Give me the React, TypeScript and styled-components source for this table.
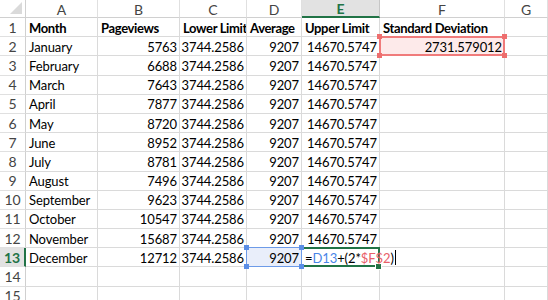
import React from "react";
import styled, { createGlobalStyle, css } from "styled-components";

const GlobalStyle = createGlobalStyle`
  html, body {
    margin: 0;
    padding: 0;
    background: #ffffff;
  }
  body {
    font-family: "Lato", "Open Sans", sans-serif;
  }
`;

// widths of columns A..F, G takes what is left
const widths = [72, 82, 67, 55, 78, 125];
const letters = ["A", "B", "C", "D", "E", "F", "G"];

type Row = [string, string, string, string, string];

const rows: Row[] = [
  ["January", "5763", "3744.2586", "9207", "14670.5747"],
  ["February", "6688", "3744.2586", "9207", "14670.5747"],
  ["March", "7643", "3744.2586", "9207", "14670.5747"],
  ["April", "7877", "3744.2586", "9207", "14670.5747"],
  ["May", "8720", "3744.2586", "9207", "14670.5747"],
  ["June", "8952", "3744.2586", "9207", "14670.5747"],
  ["July", "8781", "3744.2586", "9207", "14670.5747"],
  ["August", "7496", "3744.2586", "9207", "14670.5747"],
  ["September", "9623", "3744.2586", "9207", "14670.5747"],
  ["October", "10547", "3744.2586", "9207", "14670.5747"],
  ["November", "15687", "3744.2586", "9207", "14670.5747"],
  ["December", "12712", "3744.2586", "9207", ""],
];

const App = () => {
  return (
    <>
      <GlobalStyle />
      <Sheet>
        <Corner>
          <CornerTriangle />
        </Corner>
        {letters.map((l) => (
          <ColHead key={l} $active={l === "E"}>
            {l}
          </ColHead>
        ))}

        <RowHead $active={false}>1</RowHead>
        <Cell $bold>Month</Cell>
        <Cell $bold>Pageviews</Cell>
        <Cell $bold>Lower Limit</Cell>
        <Cell $bold>Average</Cell>
        <Cell $bold>Upper Limit</Cell>
        <Cell $bold>Standard Deviation</Cell>
        <Cell />

        {rows.map((r, i) => {
          const n = i + 2;
          const last = n === 13;
          return (
            <React.Fragment key={n}>
              <RowHead $active={last}>{n}</RowHead>
              <Cell>{r[0]}</Cell>
              <Cell $num>{r[1]}</Cell>
              <Cell $num>{r[2]}</Cell>
              <Cell $num $mark={last ? "ref" : undefined}>
                {r[3]}
                {last && <Handles $color="#5b8ee6" />}
              </Cell>
              {last ? (
                <Cell $mark="edit">
                  <Formula>
                    =<RefBlue>D13</RefBlue>+(2*<RefRed>$F$2</RefRed>)
                    <Caret />
                  </Formula>
                  <EditHandle />
                </Cell>
              ) : (
                <Cell $num>{r[4]}</Cell>
              )}
              {n === 2 ? (
                <Cell $num $mark="dep">
                  2731.579012
                  <Handles $color="#ee6e6e" />
                </Cell>
              ) : (
                <Cell />
              )}
              <Cell />
            </React.Fragment>
          );
        })}

        {[14, 15].map((n) => (
          <React.Fragment key={n}>
            <RowHead $active={false}>{n}</RowHead>
            {letters.map((l) => (
              <Cell key={l} />
            ))}
          </React.Fragment>
        ))}
      </Sheet>
    </>
  );
};

const Sheet = styled.div`
  display: grid;
  grid-template-columns: 26px ${widths.map((w) => `${w}px`).join(" ")} 1fr;
  grid-template-rows: 18px repeat(15, 19.2px);
  width: 548px;
  height: 300px;
  overflow: hidden;
  font-size: 13px;
  color: #000000;
`;

const Corner = styled.div`
  position: relative;
  border-right: 1px solid #d0d0d0;
  border-bottom: 1px solid #d0d0d0;
  background: #ffffff;
`;

const CornerTriangle = styled.div`
  position: absolute;
  right: 3px;
  bottom: 3px;
  width: 0;
  height: 0;
  border-left: 12px solid transparent;
  border-bottom: 12px solid #dadada;
`;

const ColHead = styled.div<{ $active: boolean }>`
  display: flex;
  align-items: center;
  justify-content: center;
  box-sizing: border-box;
  border-right: 1px solid #e0e0e0;
  border-bottom: 1px solid #d0d0d0;
  color: #444444;
  font-size: 14px;
  padding-top: 1px;
  ${({ $active }) =>
    $active &&
    css`
      background: #e2e2e2;
      color: #217346;
      font-weight: 700;
      border-bottom: 2px solid #217346;
      border-right-color: #c6c6c6;
    `}
`;

const RowHead = styled.div<{ $active: boolean }>`
  display: flex;
  align-items: center;
  justify-content: center;
  box-sizing: border-box;
  border-right: 1px solid #d0d0d0;
  border-bottom: 1px solid #e0e0e0;
  color: #444444;
  font-size: 14px;
  ${({ $active }) =>
    $active &&
    css`
      background: #e2e2e2;
      color: #217346;
      font-weight: 700;
      border-right: 2px solid #217346;
    `}
`;

const markStyles = {
  dep: css`
    background: #fdeaea;
    overflow: visible;
    z-index: 2;
    &::after {
      content: "";
      position: absolute;
      inset: -1px;
      border: 2px solid #f07b7b;
      pointer-events: none;
    }
  `,
  ref: css`
    background: #e9eefa;
    overflow: visible;
    z-index: 3;
    &::after {
      content: "";
      position: absolute;
      inset: -1px;
      border: 1px solid #6d9be8;
      pointer-events: none;
    }
  `,
  edit: css`
    overflow: visible;
    z-index: 2;
    &::after {
      content: "";
      position: absolute;
      inset: -1px -1px -1px -2px;
      border: 2px solid #217346;
      pointer-events: none;
    }
  `,
};

const Cell = styled.div<{
  $bold?: boolean;
  $num?: boolean;
  $mark?: "dep" | "ref" | "edit";
}>`
  position: relative;
  display: flex;
  align-items: center;
  justify-content: ${({ $num }) => ($num ? "flex-end" : "flex-start")};
  box-sizing: border-box;
  padding: 1px 2px 0 3px;
  border-right: 1px solid #dadada;
  border-bottom: 1px solid #dadada;
  white-space: nowrap;
  overflow: hidden;
  font-weight: ${({ $bold }) => ($bold ? 700 : 400)};
  letter-spacing: ${({ $bold }) => ($bold ? "-0.35px" : "-0.1px")};
  ${({ $mark }) => $mark && markStyles[$mark]}
`;

const Handles = styled.span<{ $color: string }>`
  position: absolute;
  inset: -3px;
  pointer-events: none;
  z-index: 1;
  background:
    linear-gradient(${({ $color }) => $color}, ${({ $color }) => $color}) left top / 5px 5px no-repeat,
    linear-gradient(${({ $color }) => $color}, ${({ $color }) => $color}) right top / 5px 5px no-repeat,
    linear-gradient(${({ $color }) => $color}, ${({ $color }) => $color}) left bottom / 5px 5px no-repeat,
    linear-gradient(${({ $color }) => $color}, ${({ $color }) => $color}) right bottom / 5px 5px no-repeat;
`;

const EditHandle = styled.span`
  position: absolute;
  right: -3px;
  bottom: -4px;
  width: 5px;
  height: 5px;
  background: #217346;
  border: 1px solid #ffffff;
  z-index: 3;
`;

const Formula = styled.span`
  position: relative;
  z-index: 4;
  display: inline-flex;
  align-items: center;
`;

const RefBlue = styled.span`
  color: #4a86e8;
`;

const RefRed = styled.span`
  color: #e8606a;
`;

const Caret = styled.span`
  display: inline-block;
  width: 1px;
  height: 15px;
  margin-left: 1px;
  background: #000000;
`;

export default App;
